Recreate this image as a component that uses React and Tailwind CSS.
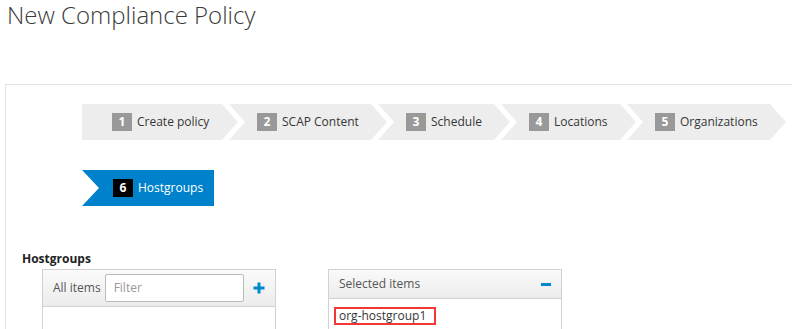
import React from 'react';

const steps = [
  { n: 1, label: 'Create policy', w: 'w-[156px]', pl: 'pl-[30px]', shape: 'first' },
  { n: 2, label: 'SCAP Content', w: 'w-[158px]', pl: 'pl-[28px]', shape: 'mid' },
  { n: 3, label: 'Schedule', w: 'w-[132px]', pl: 'pl-[28px]', shape: 'mid' },
  { n: 4, label: 'Locations', w: 'w-[135px]', pl: 'pl-[28px]', shape: 'mid' },
  { n: 5, label: 'Organizations', w: 'w-[159px]', pl: 'pl-[28px]', shape: 'mid' },
];

const shapes = {
  first: '[clip-path:polygon(0_0,calc(100%_-_16px)_0,100%_50%,calc(100%_-_16px)_100%,0_100%)]',
  mid: '[clip-path:polygon(0_0,calc(100%_-_16px)_0,100%_50%,calc(100%_-_16px)_100%,0_100%,16px_50%)]',
  last: '[clip-path:polygon(0_0,100%_0,100%_100%,0_100%,17px_50%)]',
};

const Step = ({ step, index }) => (
  <div
    className={`${step.w} ${step.pl} ${shapes[step.shape]} ${index > 0 ? '-ml-[9px]' : ''} h-[36px] shrink-0 flex items-center bg-[#ededed]`}
  >
    <span className="w-[20px] h-[18px] flex items-center justify-center bg-[#999999] text-white text-[12px] font-bold leading-none">
      {step.n}
    </span>
    <span className="ml-[5px] text-[12px] text-[#363636] whitespace-nowrap">{step.label}</span>
  </div>
);

const App = () => {
  return (
    <div className="w-[792px] h-[329px] overflow-hidden bg-white font-['Open_Sans',sans-serif] text-[#363636]">
      <h1 className="mt-[1px] pl-[7px] text-[24px] leading-[28px] font-light text-[#3a3a3a]">
        New Compliance Policy
      </h1>

      <div className="mt-[55px] ml-[5px] w-[900px] h-[400px] border border-[#e2e2e2] pl-[16px]">
        {/* Wizard steps */}
        <div className="ml-[60px] mt-[19px] flex">
          {steps.map((s, i) => (
            <Step key={s.n} step={s} index={i} />
          ))}
        </div>
        <div className="ml-[60px] mt-[30px] flex">
          <div className={`w-[132px] pl-[31px] h-[36px] flex items-center bg-[#0081cc] ${shapes.last}`}>
            <span className="w-[20px] h-[18px] flex items-center justify-center bg-black text-white text-[12px] font-bold leading-none">
              6
            </span>
            <span className="ml-[5px] text-[12px] text-white whitespace-nowrap">Hostgroups</span>
          </div>
        </div>

        <div className="mt-[44px] text-[12px] leading-[17px] font-bold text-[#222]">Hostgroups</div>

        <div className="mt-[2px] ml-[20px] flex gap-[52px]">
          {/* All items */}
          <div className="w-[234px] h-[200px] border border-[#d1d1d1]">
            <div className="h-[37px] flex items-center pl-[10px] pr-[10px] border-b border-[#d1d1d1] bg-linear-to-b from-[#fafafa] to-[#ececec]">
              <span className="text-[12px] text-[#555]">All items</span>
              <div className="ml-[4px] w-[139px] h-[28px] border border-[#bbbbbb] rounded-[2px] bg-white flex items-center pl-[8px]">
                <span className="text-[12px] text-[#999]">Filter</span>
              </div>
              <svg className="ml-auto" width="12" height="12" viewBox="0 0 12 12">
                <path d="M6 0.5v11M0.5 6h11" stroke="#0088ce" strokeWidth="3" />
              </svg>
            </div>
          </div>

          {/* Selected items */}
          <div className="w-[234px] h-[200px] border border-[#d1d1d1]">
            <div className="h-[29px] flex items-center pl-[10px] pr-[10px] border-b border-[#d1d1d1] bg-linear-to-b from-[#fafafa] to-[#ececec]">
              <span className="text-[12px] text-[#555]">Selected items</span>
              <span className="ml-auto w-[10px] h-[3px] bg-[#0088ce]" />
            </div>
            <div className="flex items-start pt-[8px] pl-[5px]">
              <span className="border-2 border-[#f23535] pl-[3px] pr-[8px] text-[12px] leading-[14px] text-[#363636]">
                org-hostgroup1
              </span>
            </div>
          </div>
        </div>
      </div>
    </div>
  );
};

export default App;
